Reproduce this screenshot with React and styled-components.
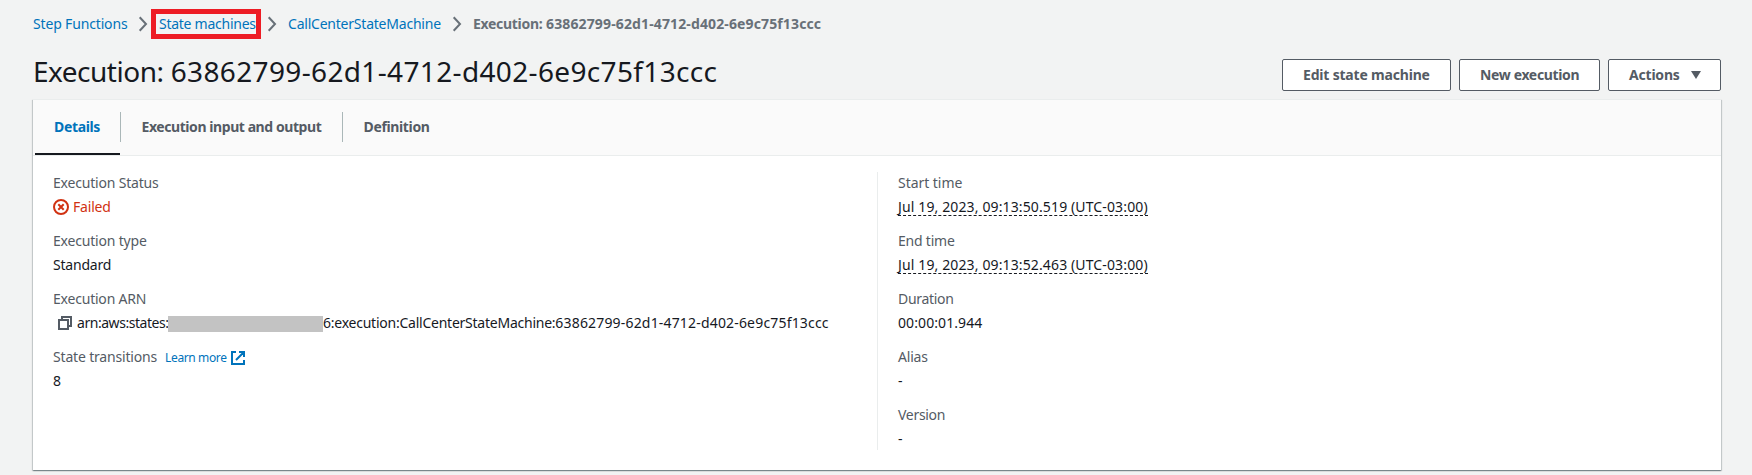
import React from 'react';
import styled, { createGlobalStyle } from 'styled-components';

const GlobalStyle = createGlobalStyle`
  *, *::before, *::after { box-sizing: border-box; }
  body {
    margin: 0;
    background: #f2f3f3;
    color: #16191f;
    font: 400 14px/22px "Noto Sans", "Open Sans", sans-serif;
  }
`;

const Page = styled.main`
  height: 475px;
  padding: 0 31px 0 33px;
  overflow: hidden;
`;

const Text = styled.span`
  white-space: nowrap;
  letter-spacing: ${(p) => p.$track || 0}px;
`;

const Breadcrumbs = styled.nav`
  display: flex;
  align-items: center;
  padding-top: 13px;
  height: 35px;
`;

const Crumb = styled.a`
  position: relative;
  width: ${(p) => p.$width}px;
  color: #0073bb;
  text-decoration: none;
  white-space: nowrap;
`;

const CurrentCrumb = styled.span`
  color: #687078;
  font-weight: 700;
  white-space: pre;
`;

const Highlight = styled.span`
  position: absolute;
  left: -8px;
  top: -4px;
  width: 110px;
  height: 30px;
  border: 5px solid #ed1c24;
`;

const ChevronIcon = styled.svg`
  flex: none;
  width: 31px;
  height: 16px;
  fill: none;
  stroke: #687078;
  stroke-width: 2;
`;

const TitleRow = styled.header`
  display: flex;
  align-items: flex-end;
  justify-content: space-between;
  height: 56px;
`;

const Title = styled.h1`
  margin: 0 0 2px;
  font-size: 28px;
  font-weight: 400;
  line-height: 36px;
  white-space: pre;
`;

const ButtonGroup = styled.div`
  display: flex;
  gap: 8px;
`;

const Button = styled.button`
  display: flex;
  align-items: center;
  justify-content: flex-start;
  width: ${(p) => p.$width}px;
  height: 32px;
  padding: 0 20px;
  background: #fff;
  border: 1px solid #545b64;
  border-radius: 2px;
  color: #545b64;
  font: inherit;
  font-weight: 700;
`;

const Caret = styled.svg`
  flex: none;
  width: 10px;
  height: 8px;
  margin-left: 11px;
  fill: #545b64;
`;

const Panel = styled.section`
  height: 371px;
  margin-top: 8px;
  background: #fff;
  border-top: 1px solid #eaeded;
  box-shadow: 0 1px 1px 0 rgba(0, 28, 36, 0.3), 1px 1px 1px 0 rgba(0, 28, 36, 0.15),
    -1px 1px 1px 0 rgba(0, 28, 36, 0.15);
`;

const TabList = styled.div`
  display: flex;
  height: 56px;
  padding: 0 2px;
  background: #fafafa;
  border-bottom: 1px solid #eaeded;
`;

const Tab = styled.div`
  position: relative;
  width: ${(p) => p.$width}px;
  padding: 16px 0 0 ${(p) => p.$indent}px;
  color: ${(p) => (p.$active ? '#0073bb' : '#545b64')};
  font-weight: 700;

  &::before {
    content: '';
    position: absolute;
    right: 0;
    top: 12px;
    width: 1px;
    height: 30px;
    background: ${(p) => (p.$last ? 'transparent' : '#aab7b8')};
  }

  &::after {
    content: '';
    position: absolute;
    left: 0;
    right: 1px;
    bottom: 0;
    height: 2px;
    background: ${(p) => (p.$active ? '#16191f' : 'transparent')};
  }
`;

const Columns = styled.div`
  display: grid;
  grid-template-columns: 1fr 1fr;
  padding: 16px 20px 20px;
`;

const Column = styled.dl`
  display: flex;
  flex-direction: column;
  gap: 12px;
  height: 278px;
  margin: 0;
  padding-left: ${(p) => (p.$divided ? 20 : 0)}px;
  border-left: ${(p) => (p.$divided ? '1px solid #eaeded' : 'none')};
`;

const Field = styled.div`
  height: 46px;
`;

const Label = styled.dt`
  display: flex;
  height: 22px;
  margin-bottom: 2px;
  color: #545b64;
`;

const Value = styled.dd`
  display: flex;
  align-items: center;
  height: 22px;
  margin: 0;
  color: ${(p) => (p.$error ? '#d13212' : '#16191f')};
`;

const ArnPrefix = styled.span`
  width: 91px;
  white-space: nowrap;
`;

const StatusIcon = styled.svg`
  width: 16px;
  height: 16px;
  margin-right: 4px;
  fill: none;
  stroke: #d13212;
  stroke-width: 2;
`;

const CopyIcon = styled.svg`
  width: 14px;
  height: 14px;
  margin: 0 5px;
  fill: none;
  stroke: #545b64;
  stroke-width: 2;
`;

const Redaction = styled.span`
  width: 155px;
  height: 16px;
  margin-top: 2px;
  background: #c3c3c3;
`;

const DateText = styled.span`
  height: 17px;
  margin-top: 1px;
  border-bottom: 1px dashed #16191f;
  line-height: 16px;
`;

const LearnMore = styled.a`
  display: flex;
  align-items: center;
  margin: 2px 0 0 8px;
  color: #0073bb;
  font-size: 12px;
  text-decoration: none;
`;

const ExternalIcon = styled.svg`
  width: 14px;
  height: 14px;
  margin-left: 4px;
  fill: none;
  stroke: #0073bb;
  stroke-width: 2;
`;

const EXECUTION_ID = '63862799-62d1-4712-d402-6e9c75f13ccc';

function Chevron() {
  return (
    <ChevronIcon viewBox="0 0 31 16">
      <path d="M11.7 1.2 18 8l-6.3 6.8" />
    </ChevronIcon>
  );
}

function Detail({ label, track, extra, children, error }) {
  return (
    <Field>
      <Label>
        <Text $track={track}>{label}</Text>
        {extra}
      </Label>
      <Value $error={error}>{children}</Value>
    </Field>
  );
}

export default function App() {
  return (
    <Page>
      <GlobalStyle />
      <Breadcrumbs>
        <Crumb $width={95}><Text $track={-0.16}>Step Functions</Text></Crumb>
        <Chevron />
        <Crumb $width={98}>
          <Text $track={-0.26}>State machines</Text>
          <Highlight />
        </Crumb>
        <Chevron />
        <Crumb $width={154}><Text $track={-0.22}>CallCenterStateMachine</Text></Crumb>
        <Chevron />
        <CurrentCrumb>
          <Text $track={-0.3}>Execution:</Text> <Text $track={0.13}>{EXECUTION_ID}</Text>
        </CurrentCrumb>
      </Breadcrumbs>

      <TitleRow>
        <Title>
          <Text $track={-0.5}>Execution:</Text> <Text $track={0.35}>{EXECUTION_ID}</Text>
        </Title>
        <ButtonGroup>
          <Button $width={169}><Text $track={-0.19}>Edit state machine</Text></Button>
          <Button $width={141}><Text $track={-0.35}>New execution</Text></Button>
          <Button $width={113}>
            <Text $track={-0.2}>Actions</Text>
            <Caret viewBox="0 0 10 8"><path d="M0 0h10L5 8z" /></Caret>
          </Button>
        </ButtonGroup>
      </TitleRow>

      <Panel>
        <TabList>
          <Tab $active $width={86} $indent={19}><Text $track={-0.35}>Details</Text></Tab>
          <Tab $width={222} $indent={20.5}><Text $track={-0.43}>Execution input and output</Text></Tab>
          <Tab $last $width={110} $indent={20.5}><Text $track={-0.36}>Definition</Text></Tab>
        </TabList>
        <Columns>
          <Column>
            <Detail label="Execution Status" track={-0.19} error>
              <StatusIcon viewBox="0 0 16 16">
                <circle cx="8" cy="8" r="7" />
                <path d="m5.3 5.3 5.4 5.4m0-5.4-5.4 5.4" />
              </StatusIcon>
              <Text $track={-0.2}>Failed</Text>
            </Detail>
            <Detail label="Execution type" track={-0.19}>
              <Text $track={-0.21}>Standard</Text>
            </Detail>
            <Detail label="Execution ARN" track={-0.21}>
              <CopyIcon viewBox="0 0 14 14">
                <path d="M1 4h9v9H1zM4 4V1h9v9h-3" />
              </CopyIcon>
              <ArnPrefix><Text $track={-0.46}>arn:aws:states:</Text></ArnPrefix>
              <Redaction />
              <Text $track={-0.24}>6:execution:CallCenterStateMachine:</Text>
              <Text $track={0.175}>{EXECUTION_ID}</Text>
            </Detail>
            <Detail
              label="State transitions"
              track={-0.175}
              extra={
                <LearnMore>
                  <Text $track={-0.38}>Learn more</Text>
                  <ExternalIcon viewBox="0 0 14 14">
                    <path d="M5 1H1v12h12V9M8 1h5v5M13 1 5 9" />
                  </ExternalIcon>
                </LearnMore>
              }
            >
              <Text>8</Text>
            </Detail>
          </Column>
          <Column $divided>
            <Detail label="Start time" track={-0.04}>
              <DateText><Text $track={0.13}>Jul 19, 2023, 09:13:50.519 (UTC-03:00)</Text></DateText>
            </Detail>
            <Detail label="End time" track={-0.21}>
              <DateText><Text $track={0.13}>Jul 19, 2023, 09:13:52.463 (UTC-03:00)</Text></DateText>
            </Detail>
            <Detail label="Duration" track={-0.31}>
              <Text $track={0.09}>00:00:01.944</Text>
            </Detail>
            <Detail label="Alias" track={-0.2}><Text>-</Text></Detail>
            <Detail label="Version" track={-0.3}><Text>-</Text></Detail>
          </Column>
        </Columns>
      </Panel>
    </Page>
  );
}
